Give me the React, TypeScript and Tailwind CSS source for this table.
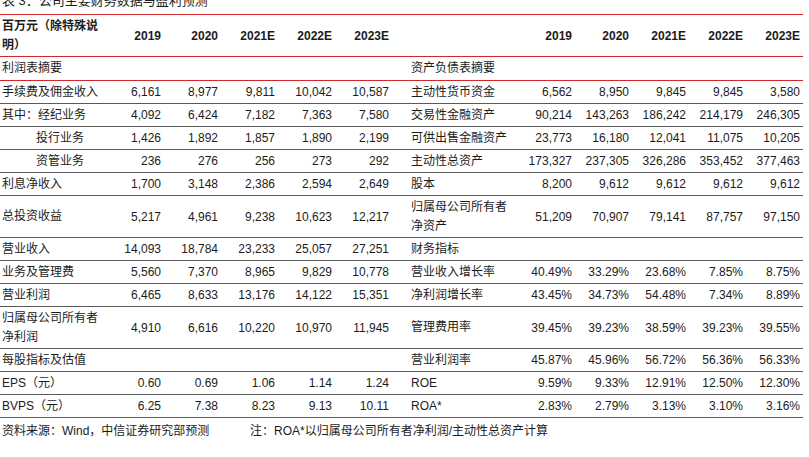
type Row = {
  left: string | string[];
  leftVals?: string[];
  right?: string | string[];
  rightVals?: string[];
  indent?: boolean;
  tall?: boolean;
  line?: "red" | "gray";
};

const rows: Row[] = [
  { left: "利润表摘要", right: "资产负债表摘要", line: "red" },
  {
    left: "手续费及佣金收入",
    leftVals: ["6,161", "8,977", "9,811", "10,042", "10,587"],
    right: "主动性货币资金",
    rightVals: ["6,562", "8,950", "9,845", "9,845", "3,580"],
  },
  {
    left: "其中：经纪业务",
    leftVals: ["4,092", "6,424", "7,182", "7,363", "7,580"],
    right: "交易性金融资产",
    rightVals: ["90,214", "143,263", "186,242", "214,179", "246,305"],
  },
  {
    left: "投行业务",
    indent: true,
    leftVals: ["1,426", "1,892", "1,857", "1,890", "2,199"],
    right: "可供出售金融资产",
    rightVals: ["23,773", "16,180", "12,041", "11,075", "10,205"],
  },
  {
    left: "资管业务",
    indent: true,
    leftVals: ["236", "276", "256", "273", "292"],
    right: "主动性总资产",
    rightVals: ["173,327", "237,305", "326,286", "353,452", "377,463"],
  },
  {
    left: "利息净收入",
    leftVals: ["1,700", "3,148", "2,386", "2,594", "2,649"],
    right: "股本",
    rightVals: ["8,200", "9,612", "9,612", "9,612", "9,612"],
  },
  {
    left: "总投资收益",
    leftVals: ["5,217", "4,961", "9,238", "10,623", "12,217"],
    right: ["归属母公司所有者", "净资产"],
    rightVals: ["51,209", "70,907", "79,141", "87,757", "97,150"],
    tall: true,
  },
  {
    left: "营业收入",
    leftVals: ["14,093", "18,784", "23,233", "25,057", "27,251"],
    right: "财务指标",
  },
  {
    left: "业务及管理费",
    leftVals: ["5,560", "7,370", "8,965", "9,829", "10,778"],
    right: "营业收入增长率",
    rightVals: ["40.49%", "33.29%", "23.68%", "7.85%", "8.75%"],
  },
  {
    left: "营业利润",
    leftVals: ["6,465", "8,633", "13,176", "14,122", "15,351"],
    right: "净利润增长率",
    rightVals: ["43.45%", "34.73%", "54.48%", "7.34%", "8.89%"],
  },
  {
    left: ["归属母公司所有者", "净利润"],
    leftVals: ["4,910", "6,616", "10,220", "10,970", "11,945"],
    right: "管理费用率",
    rightVals: ["39.45%", "39.23%", "38.59%", "39.23%", "39.55%"],
    tall: true,
  },
  {
    left: "每股指标及估值",
    right: "营业利润率",
    rightVals: ["45.87%", "45.96%", "56.72%", "56.36%", "56.33%"],
  },
  {
    left: "EPS（元）",
    leftVals: ["0.60", "0.69", "1.06", "1.14", "1.24"],
    right: "ROE",
    rightVals: ["9.59%", "9.33%", "12.91%", "12.50%", "12.30%"],
  },
  {
    left: "BVPS（元）",
    leftVals: ["6.25", "7.38", "8.23", "9.13", "10.11"],
    right: "ROA*",
    rightVals: ["2.83%", "2.79%", "3.13%", "3.10%", "3.16%"],
    line: "red",
  },
];

const years = ["2019", "2020", "2021E", "2022E", "2023E"];

const gridCols =
  "grid grid-cols-[107px_57px_57px_57px_57px_57px_126px_57px_57px_57px_57px_57px]";

function Label({ text, className }: { text: string | string[]; className: string }) {
  const lines = Array.isArray(text) ? text : [text];
  return (
    <div className={`flex flex-col justify-center leading-[19px] ${className}`}>
      {lines.map((l) => (
        <span key={l} className="whitespace-nowrap">
          {l}
        </span>
      ))}
    </div>
  );
}

function Values({ vals }: { vals?: string[] }) {
  return (
    <>
      {[0, 1, 2, 3, 4].map((i) => (
        <div key={i} className="flex items-center justify-end pr-[3px] whitespace-nowrap">
          {vals ? vals[i] : ""}
        </div>
      ))}
    </>
  );
}

export default function App() {
  return (
    <main
      className="w-[809px] h-[457px] overflow-hidden bg-white text-[12px] text-[#1c1c1c]"
      style={{ fontFamily: '"Liberation Sans", "Noto Sans CJK SC", sans-serif' }}
    >
      {/* caption, cut off at the top edge as in the source */}
      <div className="h-[14px] overflow-hidden pl-[2px]">
        <p className="-mt-[6px] text-[13px] leading-[13px]">表 3：公司主要财务数据与盈利预测</p>
      </div>

      <div className="w-[803px] border-t border-[#d3272e]">
        <div className={`${gridCols} h-[42px] border-b border-[#d3272e] font-bold`}>
          <Label text={["百万元（除特殊说", "明）"]} className="pl-[2px]" />
          <Values vals={years} />
          <div />
          <Values vals={years} />
        </div>

        {rows.map((r, idx) => (
          <div
            key={idx}
            className={`${gridCols} ${r.tall ? "h-[42px]" : idx === 0 ? "h-[24px]" : "h-[23px]"} border-b ${
              r.line === "red" ? "border-[#d3272e]" : "border-[#5a5a5a]"
            }`}
          >
            <Label text={r.left} className={r.indent ? "pl-[36px]" : "pl-[2px]"} />
            <Values vals={r.leftVals} />
            <Label text={r.right ?? ""} className="pl-[19px]" />
            <Values vals={r.rightVals} />
          </div>
        ))}
      </div>

      <div className="mt-[4px] flex pl-[2px] leading-[18px]">
        <span className="w-[248px]">资料来源：Wind，中信证券研究部预测</span>
        <span>注：ROA*以归属母公司所有者净利润/主动性总资产计算</span>
      </div>
    </main>
  );
}
